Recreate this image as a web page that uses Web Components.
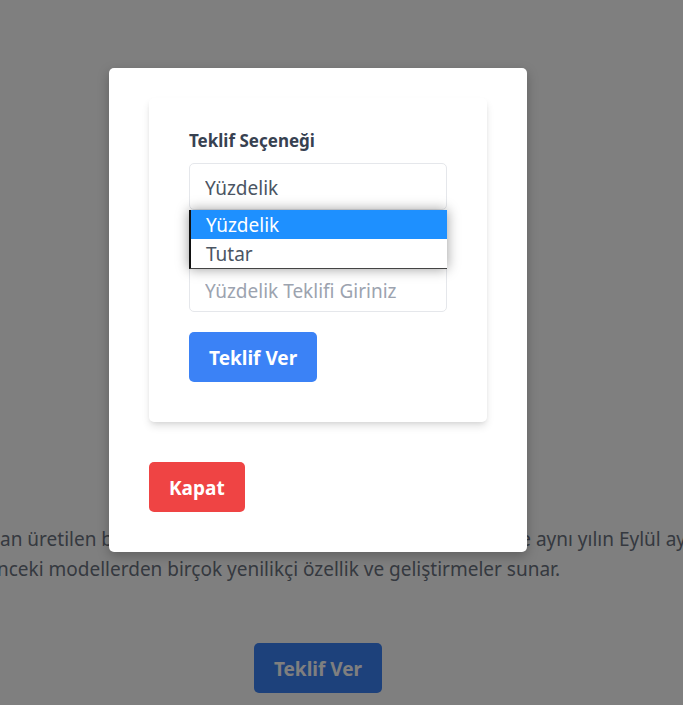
<!DOCTYPE html>
<html lang="tr">
<head>
<meta charset="utf-8">
<meta name="viewport" content="width=device-width, initial-scale=1">
<title>Teklif Ver</title>
<style>
  html, body { height: 100%; }
  body {
    margin: 0;
    overflow: hidden;
    background: #fff;
    color: #374151;
    font: 19px/30px "Noto Sans", "Open Sans", sans-serif;
  }
</style>
</head>
<body>
<offer-page></offer-page>

<script>
const define = (name, html, setup) => {
  const template = document.createElement("template");
  template.innerHTML = html;
  customElements.define(name, class extends HTMLElement {
    constructor() {
      super();
      this.attachShadow({ mode: "open" }).append(template.content.cloneNode(true));
    }
    connectedCallback() { if (setup) setup(this, this.shadowRoot); }
  });
};

define("action-button", `
  <style>
    :host { display: inline-block; --fill: #3b82f6; }
    :host([tone="danger"]) { --fill: #ef4444; }
    button {
      display: block; border: 0; border-radius: 5px; padding: 11px 20px 9px;
      background: var(--fill); color: #fff;
      font: inherit; font-weight: 700; line-height: 30px; cursor: pointer;
    }
  </style>
  <button type="button"><slot></slot></button>`);

define("option-list", `
  <style>
    :host {
      display: block; box-sizing: border-box; background: #fff;
      border-left: 2px solid #111; border-bottom: 1px solid #444;
      box-shadow: 0 0 12px rgba(0, 0, 0, .4);
    }
    ::slotted(div) { padding: 2px 15px 0; line-height: 27px; color: #4b5563; cursor: default; }
    ::slotted(div[aria-selected="true"]) { background: #1e90ff; color: #fff; }
  </style>
  <slot></slot>`);

define("offer-select", `
  <style>
    :host { display: block; position: relative; }
    label {
      display: block; margin-bottom: 10px;
      font-size: 17px; line-height: 25px; font-weight: 700; color: #374151;
    }
    select {
      display: block; box-sizing: border-box; width: 100%; height: 47px; margin: 0; appearance: none;
      padding: 12px 15px 8px; border: 1px solid #e5e7eb; border-radius: 5px;
      background: #fff; color: #4b5563; font: inherit; line-height: 25px; outline: 0;
    }
    option-list { position: absolute; top: 100%; left: 0; right: 0; z-index: 1; }
  </style>
  <label for="kind">Teklif Seçeneği</label>
  <select id="kind"><option>Yüzdelik</option><option>Tutar</option></select>
  <option-list role="listbox" aria-label="Teklif Seçeneği">
    <div role="option" aria-selected="true">Yüzdelik</div>
    <div role="option" aria-selected="false">Tutar</div>
  </option-list>`,
  (host, root) => {
    const options = [...root.querySelectorAll("[role=option]")];
    options.forEach((option, index) => option.addEventListener("click", () => {
      root.querySelector("select").selectedIndex = index;
      options.forEach(o => o.setAttribute("aria-selected", o === option));
      root.querySelector("option-list").style.display = "none";
    }));
  });

define("offer-input", `
  <style>
    :host { display: block; }
    input {
      display: block; box-sizing: border-box; width: 100%; margin: 0;
      padding: 12px 15px 8px; border: 1px solid #e5e7eb; border-radius: 5px;
      background: #fff; color: #374151; font: inherit; line-height: 25px; height: 47px; outline: 0;
    }
    input::placeholder { color: #9ca3af; opacity: 1; }
  </style>
  <input type="text" aria-label="Yüzdelik Teklifi" placeholder="Yüzdelik Teklifi Giriniz">`);

define("offer-form", `
  <style>
    :host {
      display: block; padding: 30px 40px 40px; border-radius: 5px; background: #fff;
      box-shadow: 0 5px 8px -1px rgba(0, 0, 0, .12), 0 2px 5px -2px rgba(0, 0, 0, .1);
    }
    form { display: flex; flex-direction: column; align-items: stretch; }
    offer-input { margin: 55px 0 20px; }
    action-button { align-self: flex-start; }
  </style>
  <form>
    <offer-select></offer-select>
    <offer-input></offer-input>
    <action-button>Teklif Ver</action-button>
  </form>`);

define("modal-dialog", `
  <style>
    :host {
      display: flex; flex-direction: column; gap: 40px; box-sizing: border-box;
      width: 100%; max-width: 418px; padding: 30px 40px 40px;
      background: #fff; border-radius: 5px;
      box-shadow: 0 4px 12px rgba(0, 0, 0, .25);
    }
    ::slotted(action-button) { align-self: flex-start; }
  </style>
  <slot></slot>`);

define("page-story", `
  <style>
    :host { display: block; color: #6b7280; }
    p { margin: 0; display: flex; justify-content: space-between; white-space: nowrap; }
    .first { margin-right: -3px; }
    .last { justify-content: flex-end; padding-right: 123px; }
  </style>
  <p class="first"><span>an üretilen b</span><span>e aynı yılın Eylül ay</span></p>
  <p class="last"><span>önceki modellerden birçok yenilikçi özellik ve geliştirmeler sunar.</span></p>`);

define("offer-page", `
  <style>
    :host { display: grid; height: 100%; overflow: hidden; }
    .page, .overlay { grid-area: 1 / 1; min-width: 0; }
    .page {
      display: flex; flex-direction: column; justify-content: flex-end;
      gap: 59px; padding-bottom: 12px;
    }
    .cta { display: flex; justify-content: center; padding-right: 47px; }
    .overlay {
      z-index: 1; display: flex; justify-content: center; align-items: flex-start;
      padding: 68px 47px 0 0; background: rgba(0, 0, 0, .5);
    }
  </style>
  <div class="page">
    <page-story></page-story>
    <div class="cta"><action-button>Teklif Ver</action-button></div>
  </div>
  <div class="overlay">
    <modal-dialog role="dialog" aria-label="Teklif Ver">
      <offer-form></offer-form>
      <action-button tone="danger">Kapat</action-button>
    </modal-dialog>
  </div>`);
</script>
</body>
</html>
